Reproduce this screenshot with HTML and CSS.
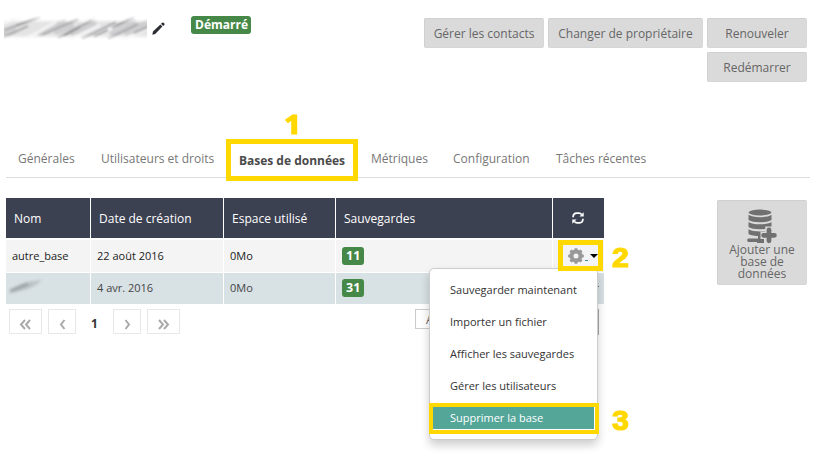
FILE: index.html
```html
<!DOCTYPE html>
<html lang="fr">
<head>
<meta charset="utf-8">
<title>Bases de données</title>
<link rel="stylesheet" href="styles.css">
</head>
<body>
<header class="top">
  <div class="identity">
    <svg class="redacted" width="143" height="30" viewBox="0 0 143 30">
      <defs>
        <filter id="soft" x="-10%" y="-30%" width="120%" height="160%"><feGaussianBlur stdDeviation="1.3"/></filter>
        <linearGradient id="fadeY" x1="0" y1="0" x2="0" y2="1"><stop offset=".04" stop-color="#000"/><stop offset=".35" stop-color="#fff"/><stop offset=".7" stop-color="#fff"/><stop offset=".97" stop-color="#000"/></linearGradient>
        <mask id="fade"><rect width="143" height="30" fill="url(#fadeY)"/></mask>
      </defs>
      <g mask="url(#fade)"><g filter="url(#soft)" fill="none">
        <path stroke="#e4e4e5" stroke-width="17" d="M-5 16H150"/>
        <path stroke="#cfcfd1" stroke-width="7" d="M34 21 62 9M50 19 70 12M66 20 92 9M106 21 132 9M120 20 146 9M-4 23 12 16"/>
        <path stroke="#f5f5f6" stroke-width="3" d="M22 26 52 9M-4 12 18 2M64 28 96 12M78 9 98 0M92 24 126 6M118 28 146 14"/>
        <path stroke="#a9a9ab" stroke-width="2.200" d="M0 17 36 4M0 24 24 13M38 22 74 6M54 25 88 7M78 26 112 9M108 15 130 4M104 26 134 11M130 20 148 12"/>
        <path stroke="#8b8b8d" stroke-width="1.500" d="M12 13 32 5M60 23 76 14M90 24 104 17M112 13 126 6"/>
      </g></g>
    </svg>
    <svg class="pencil" width="13" height="13" viewBox="0 0 13 13"><path fill="#2b2e33" d="M.3 12.7 1 9.6 8.4 2.6 10.400 4.600 3.200 11.900zM9 1.800 10.200.7Q11 0 12 1t.4 1.900l-1.300 1.100z"/></svg>
    <span class="label state">Démarré</span>
  </div>
  <div class="actions">
    <button class="btn contacts">Gérer les contacts</button>
    <button class="btn owner">Changer de propriétaire</button>
    <button class="btn">Renouveler</button>
    <button class="btn">Redémarrer</button>
  </div>
</header>

<nav class="tabs">
  <a class="t1">Générales</a>
  <a class="t2">Utilisateurs et droits</a>
  <a class="active">Bases de données<b class="mark mark1">1</b></a>
  <a class="t4">Métriques</a>
  <a class="t5">Configuration</a>
  <a class="t6">Tâches récentes</a>
</nav>

<main class="content">
  <section class="databases">
    <div class="grid">
      <div class="th">Nom</div><div class="th">Date de création</div><div class="th">Espace utilisé</div><div class="th">Sauvegardes</div>
      <div class="th refresh"><svg width="12" height="12" viewBox="0 0 12 12" fill="none" stroke="#fff" stroke-width="1.7"><path d="M1.100 5.200V4.500Q1.300 1.300 4.500 1.100H7Q8.500 1.200 9.700 2.500M10.900 6.800V7.500Q10.700 10.700 7.500 10.900H5Q3.500 10.800 2.300 9.500"/><path fill="#fff" stroke="none" d="M11.700.3V4.500H7.500zM.3 11.700V7.500H4.500z"/></svg></div>
      <div class="td">autre_base</div><div class="td">22 août 2016</div><div class="td">0Mo</div><div class="td"><span class="label">11</span></div>
      <div class="td"></div>
      <div class="td alt"><svg class="hidden-name" width="36" height="20" viewBox="0 0 36 20"><defs><filter id="soft2" x="-30%" y="-50%" width="160%" height="200%"><feGaussianBlur stdDeviation="1.7"/></filter></defs><path fill="#b9c1c4" filter="url(#soft2)" d="M1 15Q10 4 34 2 24 12 1 15"/><path stroke="#91989b" stroke-width="2" filter="url(#soft2)" d="M2 13 20 6"/></svg></div>
      <div class="td alt">4 avr. 2016</div><div class="td alt">0Mo</div><div class="td alt"><span class="label">31</span></div><div class="td alt last"><i class="caret"></i></div>
    </div>
    <div class="below">
      <div class="pager">
        <span class="page wide"><svg width="13" height="11" viewBox="0 0 13 11"><path d="M6 1 2 5.500 6 10M11 1 7 5.500 11 10"/></svg></span>
        <span class="page"><svg width="7" height="11" viewBox="0 0 7 11"><path d="M5.500 1 2 5.500 5.500 10"/></svg></span>
        <span class="current">1</span>
        <span class="page"><svg width="7" height="11" viewBox="0 0 7 11"><path d="M1.500 1 5 5.500 1.500 10"/></svg></span>
        <span class="page wide"><svg width="13" height="11" viewBox="0 0 13 11"><path d="M2 1 6 5.500 2 10M7 1 11 5.500 7 10"/></svg></span>
      </div>
      <div class="pagesize"><span class="size-label">A</span><span class="size-select"></span></div>
    </div>
    <div class="menu">
      <a>Sauvegarder maintenant</a>
      <a>Importer un fichier</a>
      <a>Afficher les sauvegardes</a>
      <a>Gérer les utilisateurs</a>
      <a class="chosen">Supprimer la base</a>
    </div>
    <div class="focus-gear">
      <svg width="16" height="16" viewBox="0 0 16 16"><g fill="#999"><path fill-rule="evenodd" d="M8 1.600a6.400 6.400 0 1 0 0 12.800A6.400 6.400 0 0 0 8 1.600zm0 3.900a2.500 2.500 0 1 1 0 5 2.500 2.500 0 0 1 0-5z"/><path id="tooth" d="M6 3 6.700.2H9.300L10 3z"/><use href="#tooth" transform="rotate(45 8 8)"/><use href="#tooth" transform="rotate(90 8 8)"/><use href="#tooth" transform="rotate(135 8 8)"/><use href="#tooth" transform="rotate(180 8 8)"/><use href="#tooth" transform="rotate(225 8 8)"/><use href="#tooth" transform="rotate(270 8 8)"/><use href="#tooth" transform="rotate(315 8 8)"/></g></svg>
      <i class="dash"></i><i class="caret"></i>
    </div>
    <div class="focus-delete"></div>
    <b class="mark mark2">2</b>
    <b class="mark mark3">3</b>
  </section>
  <button class="btn add">
    <svg width="30" height="35" viewBox="0 0 30 35"><g fill="#707070"><ellipse cx="13" cy="3.500" rx="11.500" ry="2.900"/><path d="M1.500 5.800Q5 8.200 13 8.200T24.500 5.800V11Q21 13.200 13 13.200T1.500 11zM1.500 13Q5 15.300 13 15.300T24.500 13V18Q21 20.200 13 20.200T1.500 18zM1.500 20.200Q5 22.400 13 22.400T24.500 20.200V25Q21 27 13 27T1.500 25zM11 26H15V29H17V34H10V33H1Q-.5 31 1 29.500H11z"/></g><path stroke="#dadada" stroke-width="7.500" d="M22 17.500V35M13.500 26.300H30"/><path stroke="#707070" stroke-width="4.800" stroke-linecap="round" d="M22 21V31.800M16.600 26.300H27.400"/></svg>
    <span>Ajouter une<br>base de<br>données</span>
  </button>
</main>
</body>
</html>
```

FILE: styles.css
```css
* { box-sizing: border-box; }
body { margin: 0; width: 820px; height: 460px; overflow: hidden; background: #fff; color: #333; font-family: "Open Sans", sans-serif; font-size: 12px; }
svg { display: block; flex: none; }

.top { display: flex; height: 139px; justify-content: space-between; padding-right: 13px; }
.identity { display: flex; align-items: flex-start; padding-left: 4px; }
.redacted { margin-top: 13px; }
.pencil { margin: 22px 0 0 5px; }
.label { display: inline-block; height: 18px; line-height: 18px; padding: 0 4px; border-radius: 3px; background: #468847; color: #fff; font-weight: 700; font-size: 12px; text-align: center; white-space: nowrap; }
.td .label { width: 22px; font-size: 12.5px; }
.state { width: 60px; margin: 16px 0 0 26px; }
.actions { display: grid; grid-template-columns: 120px 155px 100px; grid-auto-rows: 30px; gap: 4px; padding-top: 18px; }
.actions .btn:last-child { grid-column: 3; }
.btn { border: 1px solid #d0d0d0; border-right-color: #d8d8d8; border-bottom-color: #d6d6d6; border-radius: 2px; background: #dadada; color: #666; font: 12px/28px "Open Sans", sans-serif; padding: 0; white-space: nowrap; }
.actions .btn { padding-top: 1px; }

.tabs { display: flex; height: 39px; margin: 0 10px 0 6px; border-bottom: 1px solid #ddd; color: #777; line-height: 39px; white-space: nowrap; }
.tabs .t1 { width: 83px; padding-left: 12px; }
.tabs .t2 { width: 137px; padding-left: 12px; }
.tabs .active { position: relative; width: 132px; height: 42px; border: 5px solid #ffd800; background: #fff; color: #4a4a4a; font-weight: 700; line-height: 33px; text-align: center; }
.tabs .t4 { width: 83px; padding-left: 13px; }
.tabs .t5 { width: 103px; padding-left: 12px; }
.tabs .t6 { padding-left: 12px; }

.mark { position: absolute; color: #ffd800; font: 700 27px/27px "Liberation Sans", sans-serif; -webkit-text-stroke: 1.2px #ffd800; transform: scaleX(1.12); }
.mark1 { left: 54px; top: -34px; font-family: "Open Sans", sans-serif; }

.content { display: flex; align-items: flex-start; padding: 20px 13px 0 6px; justify-content: space-between; }
.databases { position: relative; width: 598px; }
.grid { display: grid; grid-template-columns: 84px 132px 111px 216px 51px; grid-template-rows: 40px 33px 31px; gap: 1px; }
.th { display: flex; align-items: center; padding-left: 8px; background: #3c4152; color: #fff; white-space: nowrap; }
.refresh { justify-content: center; padding: 0 1px 0 0; }
.td { display: flex; align-items: center; padding: 0 0 1px 6px; background: #f4f4f4; border-top: 1px solid #fff; color: #222; font-size: 11px; white-space: nowrap; }
.td.alt { background: #d8e1e4; border: 0; color: #444; padding-bottom: 2px; }
.hidden-name { margin-left: -4px; }
.td.last { justify-content: flex-end; padding-right: 5px; }
.caret { width: 0; height: 0; border: 4px solid transparent; border-top-color: #000; border-bottom: 0; }

.below { display: flex; justify-content: space-between; padding: 5px 5px 0 3px; }
.pager { display: flex; gap: 6px; }
.page { display: flex; align-items: center; justify-content: center; width: 28px; height: 25px; padding-top: 5px; border: 1px solid #e8e8e8; }
.wide { width: 33px; }
.page path { fill: none; stroke: #aaa; stroke-width: 2; }
.current { width: 25px; font-weight: 700; font-size: 12px; line-height: 29px; text-align: center; }
.pagesize { display: flex; width: 184px; justify-content: space-between; }
.size-label { width: 120px; height: 20px; padding-left: 10px; border: 1px solid #ccc; color: #666; font-size: 12px; line-height: 19px; }
.size-select { width: 60px; height: 26px; border: 1px solid #aaa; }

.menu { position: absolute; left: 423px; top: 70px; width: 169px; height: 172px; padding: 6px 3px; border: 1px solid #ccc; border-radius: 5px; background: #fff; box-shadow: 0 5px 10px rgba(0, 0, 0, .2); }
.menu a { display: block; height: 22px; margin-bottom: 10px; padding-left: 17px; color: #333; font-size: 11px; line-height: 22px; white-space: nowrap; }
.menu a:first-child { margin-top: 4px; }
.menu .chosen { background: #54a699; color: #fff; }
.focus-gear { position: absolute; left: 552px; top: 42px; display: flex; align-items: center; width: 45px; height: 31px; padding: 1px 0 0 5px; border: 5px solid #ffd800; background: #f4f4f4; }
.focus-gear .dash { width: 3px; height: 1px; margin: 8px 2px 0 1px; background: #3b8ea5; }
.focus-delete { position: absolute; left: 423px; top: 205px; width: 170px; height: 31px; border: 4px solid #ffd800; }
.mark2 { left: 607px; top: 47px; }
.mark3 { left: 607px; top: 210px; }

.add { display: flex; flex-direction: column; align-items: center; width: 90px; height: 85px; margin-top: 2px; padding-top: 8px; line-height: 12px; }
.add span { display: block; }
```
